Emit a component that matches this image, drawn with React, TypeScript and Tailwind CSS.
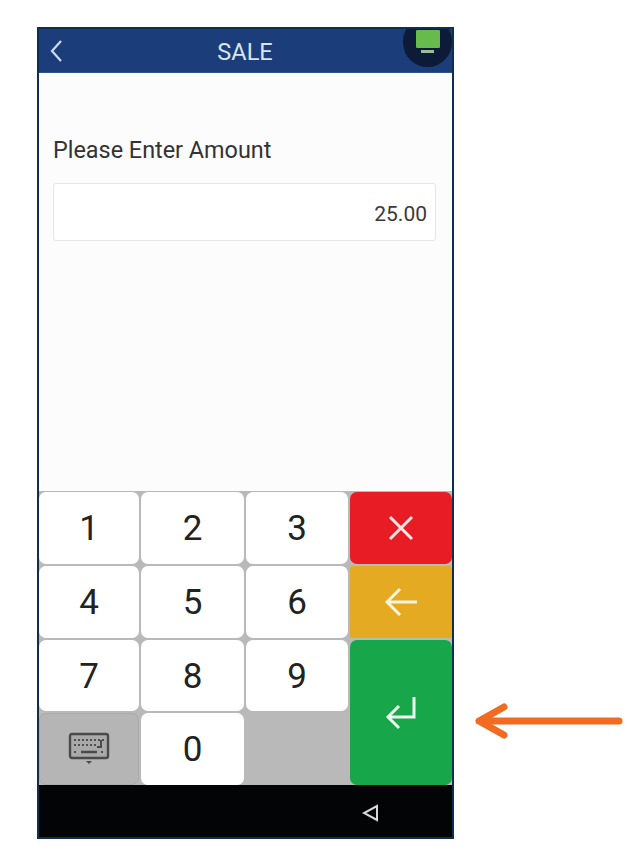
import React from "react";

const digitKey = "bg-white rounded-[7px] flex items-center justify-center pt-px text-[35px] leading-none text-[#222222]";

function Digit({ n }: { n: string }) {
  return <div className={digitKey}>{n}</div>;
}

function KeyboardIcon() {
  return (
    <svg width="42" height="34" viewBox="0 0 42 34" fill="none">
      <rect x="2" y="2" width="38" height="24" rx="2" fill="#a9a9a9" stroke="#4a4a4a" strokeWidth="2.4" />
      <g stroke="#4f4f4f" strokeWidth="2" strokeDasharray="2 2">
        <path d="M6 8H36" />
        <path d="M6 13H30" />
        <path d="M6 20H9" />
        <path d="M33 20H36" />
      </g>
      <path d="M13 20H29" stroke="#4a4a4a" strokeWidth="2.5" />
      <path d="M33 8V15H29" stroke="#4a4a4a" strokeWidth="2" />
      <path d="M18 29H24L21 32Z" fill="#4a4a4a" />
    </svg>
  );
}

export default function App() {
  return (
    <div className="w-[640px] h-[859px] bg-white flex items-start pt-[27px] pl-[37px] font-['Roboto',sans-serif] overflow-hidden">
      <div className="w-[417px] h-[812px] border-2 border-[#0f2f50] flex flex-col shrink-0">
        <header className="relative h-[44px] bg-[#1b3e7a] shrink-0 flex items-center justify-center pt-[5px] overflow-hidden border-b border-[#2f5488]">
          <svg className="absolute left-[9px] top-[9px]" width="16" height="26" viewBox="0 0 16 26" fill="none">
            <path d="M13 3L4 13L13 23" stroke="#cfdaeb" strokeWidth="2.2" />
          </svg>
          <span className="text-[#dbe4f1] text-[23.5px] leading-none -ml-[1px]">SALE</span>
          <div className="absolute left-[364px] top-[-12px] w-[49px] h-[50px] rounded-full bg-[#0d1a38] flex flex-col items-center">
            <div className="mt-[13px] w-[24px] h-[18px] bg-[#66bb4c] rounded-[1px]" />
            <div className="mt-[2px] w-[13px] h-[3px] bg-[#9cbd98]" />
          </div>
        </header>

        <main className="flex-1 bg-[#fdfcfc] px-[14px] pt-[63px]">
          <div className="text-[23.4px] leading-[28px] text-[#333333]">Please Enter Amount</div>
          <div className="mt-[19px] w-[383px] h-[58px] bg-white border border-[#e6e6e6] rounded-[3px] flex items-center justify-end pt-[5px] pr-[8px] text-[21px] text-[#3a3a3a]">
            25.00
          </div>
        </main>

        <section className="bg-[#b9b9b9] pt-px grid grid-cols-[100px_103px_102px_102px] grid-rows-[72px_72px_71px_72px] gap-x-[2px] gap-y-[2px] shrink-0">
          <Digit n="1" />
          <Digit n="2" />
          <Digit n="3" />
          <div className="bg-[#e71c24] rounded-[7px] flex items-center justify-center">
            <svg width="26" height="26" viewBox="0 0 26 26" fill="none">
              <path d="M2 2L24 24M24 2L2 24" stroke="#f7e6e6" strokeWidth="3" />
            </svg>
          </div>
          <Digit n="4" />
          <Digit n="5" />
          <Digit n="6" />
          <div className="bg-[#e3aa22] rounded-[3px] flex items-center justify-center">
            <svg width="32" height="32" viewBox="0 0 32 32" fill="none">
              <path d="M32 16H3M15 3L2 16L15 29" stroke="#fbf3dc" strokeWidth="3" />
            </svg>
          </div>
          <Digit n="7" />
          <Digit n="8" />
          <Digit n="9" />
          <div className="row-span-2 bg-[#18a64a] rounded-[7px] flex items-center justify-center">
            <svg width="32" height="34" viewBox="0 0 32 34" fill="none">
              <path d="M29 1V21H4M14 10L3 21L14 32" stroke="#eef7ef" strokeWidth="3" />
            </svg>
          </div>
          <div className="bg-[#b5b5b5] rounded-[7px] border border-[#aaaaaa] flex items-center justify-center">
            <KeyboardIcon />
          </div>
          <Digit n="0" />
          <div />
        </section>

        <footer className="h-[52px] bg-[#020406] shrink-0 flex items-center justify-end pt-[4px] pr-[73px]">
          <svg width="17" height="18" viewBox="0 0 17 18" fill="none">
            <path d="M15 2V16L2 9Z" stroke="#d8d8d8" strokeWidth="2" />
          </svg>
        </footer>
      </div>

      <div className="ml-[19px] mt-[676px] shrink-0">
        <svg width="150" height="36" viewBox="0 0 150 36" fill="none">
          <path d="M146 18H6M31 4L6 18L31 32" stroke="#f26b21" strokeWidth="7" strokeLinecap="round" strokeLinejoin="round" />
        </svg>
      </div>
    </div>
  );
}
